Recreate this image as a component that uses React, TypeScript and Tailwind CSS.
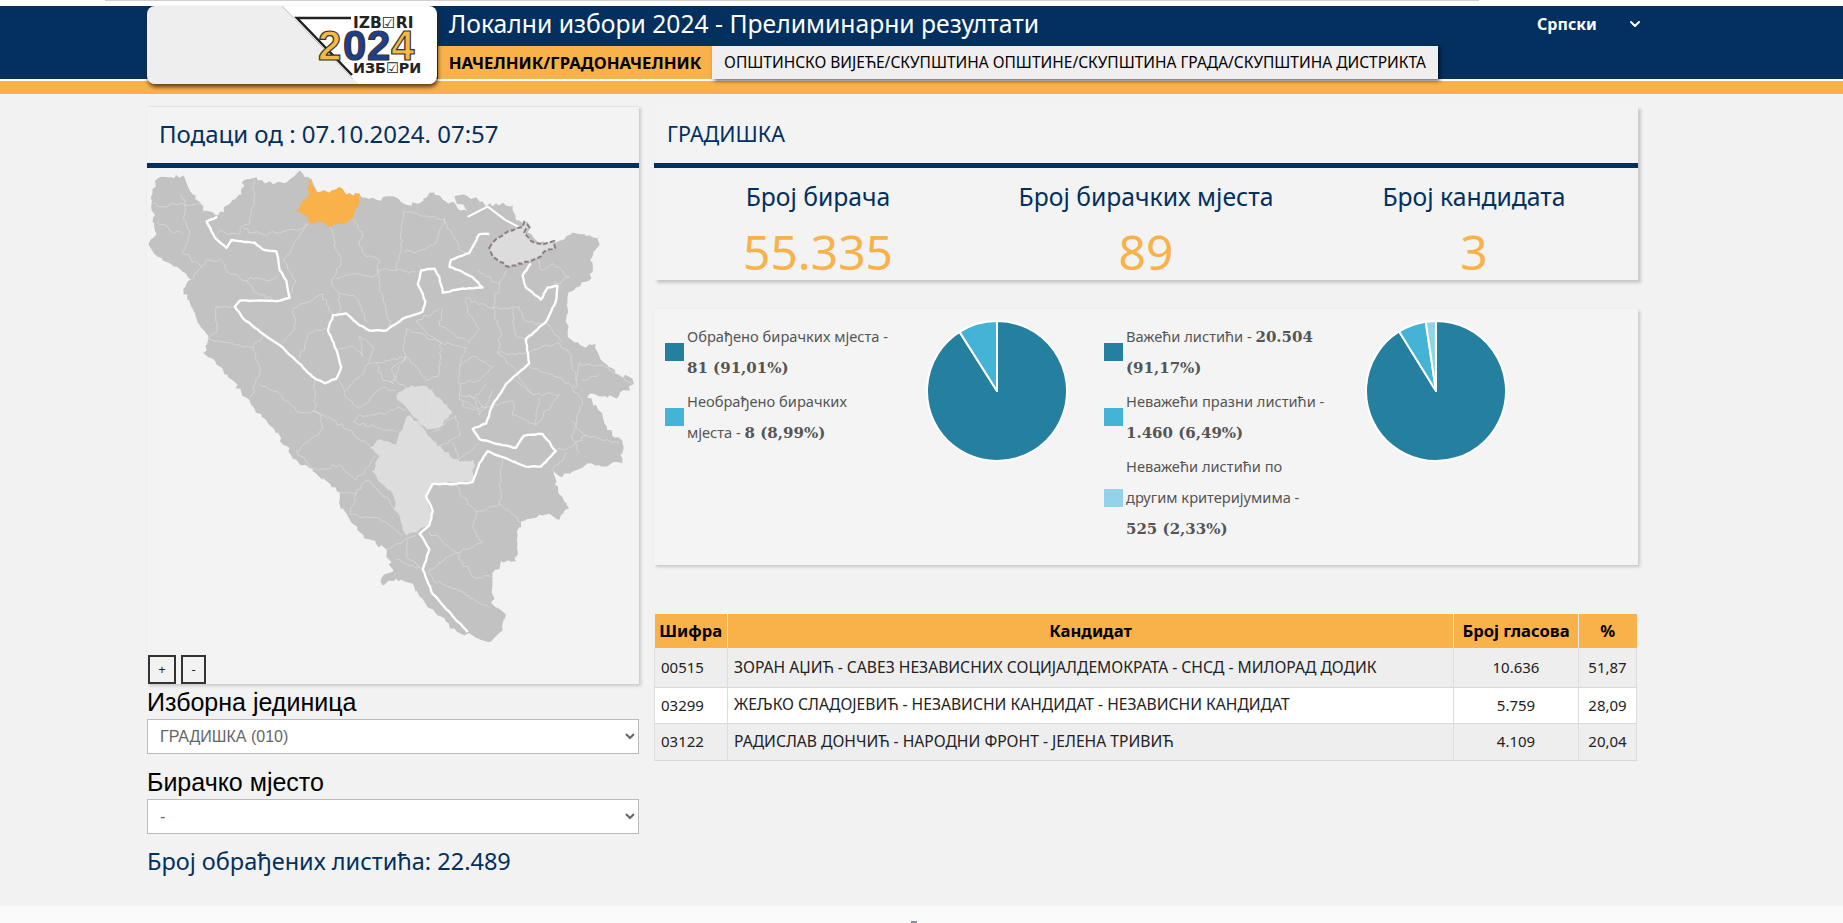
import { ChevronDown } from 'lucide-react';

const tahoma = "font-['Noto_Sans',sans-serif]";

// borders on the source map are jagged, so break every straight segment up a bit
function rough(points: string, amp: number, close = false) {
  const pts = points.split(' ').map((p) => p.split(',').map(Number));
  if (close) pts.push(pts[0]);
  let seed = pts.length * 7 + Math.round(pts[0][0]);
  const rnd = () => {
    seed = (seed * 9301 + 49297) % 233280;
    return seed / 233280 - 0.5;
  };
  const out: string[] = [];
  pts.forEach((p, i) => {
    out.push(`${p[0]},${p[1]}`);
    const q = pts[i + 1];
    if (!q) return;
    const len = Math.hypot(q[0] - p[0], q[1] - p[1]);
    const steps = Math.floor(len / 10);
    for (let s = 1; s < steps; s++) {
      const t = s / steps;
      out.push(`${p[0] + (q[0] - p[0]) * t + rnd() * amp},${p[1] + (q[1] - p[1]) * t + rnd() * amp}`);
    }
  });
  return out.join(' ');
}

const thinLines = [
  '40,125 70,135 120,125 155,130 185,130',
  '120,100 135,130 130,170 150,215 125,265 185,310 160,345',
  '50,180 80,190 90,205 130,215',
  '240,290 200,290 185,310',
  '240,285 260,320 310,350 330,340 380,350 415,335',
  '320,350 340,380 400,405',
  '225,225 240,205 270,215 300,215 310,190 330,185 340,135 345,60',
  '310,200 370,215 440,205 470,205 505,185',
  '505,185 470,230 450,270 430,290 470,350 450,400',
  '570,195 590,260 605,290 590,330 575,350 600,400 600,440',
  '640,170 670,210 660,250 680,280 720,290 715,320 770,320 785,265 790,150',
  '715,320 720,380 740,440 750,480',
  '590,345 640,330 700,340 715,320',
  '600,385 650,400 680,470',
  '790,150 840,160 915,170 960,260 985,270',
  '915,170 890,240 850,260 790,270',
  '770,320 830,325',
  '460,430 465,490 430,530',
  '460,430 510,410 550,390 560,420 580,450',
  '230,425 230,500 200,520',
  '230,425 285,430',
  '200,520 260,530 340,545 370,510',
  '340,545 360,620 330,690',
  '360,650 420,680 470,730 540,735 550,780 470,845',
  '525,640 525,730 550,740 640,790 690,830',
  '600,640 620,690 660,720 730,660 770,670',
  '480,575 510,500 560,490',
  '595,550 640,540 670,570 660,510',
  '690,590 620,670',
  '690,590 800,570 770,620 765,640 800,660',
  '800,570 830,600 860,640 900,620 905,530 800,490',
  '830,470 860,500 905,530 980,545 960,600 960,680 980,720 1040,720',
  '905,430 900,480 990,530 1020,490 990,450 980,400',
  '980,400 1060,430 1085,500 1075,560 1120,600',
  '1060,430 1140,425 1150,460 1170,470',
  '1080,360 1060,430',
  '1015,320 1080,360 1100,320',
  '1210,320 1240,300 1290,340',
  '1160,560 1260,530 1290,560 1310,640',
  '1170,600 1230,620 1310,660 1320,590 1400,600 1480,650',
  '1300,660 1330,700 1310,770 1300,810',
  '1040,720 1120,700 1120,740 1190,770 1260,680',
  '1250,845 1300,830 1340,800 1440,820',
  '1280,850 1240,900',
  '1090,870 1080,1000 1150,1050',
  '950,940 970,980 1010,1020 1080,1000',
  '1010,1020 1000,1060 1030,1110 950,1140 870,1080',
  '950,1140 930,1150 870,1190',
  '950,1140 1000,1210 1060,1210',
  '870,1190 880,1220 960,1250 1050,1300',
  '470,845 520,900 600,885 650,930 710,860',
  '600,965 650,970 680,930 750,990 770,1020',
  '650,970 630,1030 720,1040 790,1090',
  '740,1130 800,1100 830,1090',
  '800,1100 800,1150 850,1190',
  '770,1160 850,1190',
  '810,740 860,790',
  '880,660 870,720 860,780',
  '695,835 770,870 860,925',
  '960,650 1020,640 1060,600 1000,570 960,600',
  '990,680 1040,720 1060,670',
  '710,590 730,640 760,650 760,600 800,570',
  '640,760 660,740 710,740 770,720 800,725',
  '770,790 640,760',
  '880,790 950,740 960,800 900,830',
  '940,820 960,870 1000,840 1020,820',
  '960,680 1000,690 1040,650',
  '975,700 1010,720',
  '1000,690 1020,740 1040,720',
  '1120,600 1180,680 1260,680',
  '1170,470 1230,480 1270,530',
  '1230,370 1290,340',
  '1210,320 1200,290',
  '1120,430 1130,510 1160,520',
  '1075,560 1160,560',
  '1180,680 1130,640',
  '1190,770 1200,690',
  '1300,810 1320,850',
  '1340,800 1300,760',
  '1380,620 1330,640',
  '660,510 700,540 690,590',
  '800,490 790,540 800,570',
  '900,430 830,470',
];

const outline =
  '45,60 90,50 130,45 150,90 185,130 190,150 235,160 265,130 305,100 310,60 350,50 400,70 440,65 470,40 480,30 495,50 515,55 530,90 570,95 600,80 620,100 660,100 710,115 760,105 800,130 840,125 870,95 910,115 950,130 985,150 950,120 945,105 975,100 1030,120 1040,135 1070,125 1120,130 1130,175 1165,180 1175,195 1165,210 1200,240 1245,235 1250,240 1300,210 1385,225 1360,280 1350,350 1310,370 1285,400 1280,470 1295,520 1330,540 1370,535 1385,580 1430,620 1480,635 1485,650 1440,685 1405,690 1350,680 1345,690 1390,740 1420,800 1450,815 1450,880 1410,885 1345,880 1270,920 1240,900 1260,970 1290,1010 1260,1045 1235,1030 1200,1030 1145,1050 1135,1090 1130,1165 1085,1165 1060,1210 1060,1290 1100,1320 1090,1365 1050,1400 1020,1390 985,1375 975,1380 920,1340 860,1290 820,1230 770,1215 730,1235 725,1215 760,1195 740,1130 660,1080 600,1000 600,965 520,905 470,870 440,830 390,770 320,690 280,640 240,600 190,560 205,520 170,460 130,375 155,345 90,300 35,260 25,245 50,215 35,125';

const thickWest =
  '232,165 200,178 225,225 260,255 275,232 345,240 370,260 410,265 420,320 440,350 450,400 410,410 300,408 285,425 310,460 370,505 430,545 520,630 555,648 590,635 605,600 590,550 565,495 580,450 620,445 660,480 690,495 740,495 790,460 850,440 858,410 835,360 845,320 885,315 900,340 910,385 960,375 1030,370 1000,340 960,320 930,310 935,290 990,270 1020,215 1050,215';

const thickEast =
  '1175,300 1150,335 1160,370 1205,405 1225,370 1255,365 1250,410 1220,470 1160,520 1170,590 1100,650 1060,710 1040,765 1000,780 1020,810 1080,825 1130,835 1155,800 1210,795 1250,845 1205,890 1160,890 1110,870 1045,845 1020,880 1000,935 950,940 880,940 860,975 880,1020 870,1060 840,1085 870,1130 850,1190 880,1260 985,1370';

function BosniaMap() {
  return (
    <svg viewBox="21 23 1479 1498" preserveAspectRatio="none" className="block w-[492px] h-[516px]">
      <polygon fill="#c2c2c2" points={rough(outline, 13, true)} />
      <polygon fill="#dddddd" points={rough('770,685 800,660 860,655 900,690 940,735 900,775 860,780 810,730', 9, true)} />
      <polygon
        fill="#dddddd"
        points={rough('780,790 810,740 860,790 910,840 960,875 1005,870 1000,935 880,940 860,975 875,1030 870,1060 800,1090 770,1020 760,970 695,905 720,860 690,835 720,810 770,825', 9, true)}
      />
      {thinLines.map((points) => (
        <polyline key={points} points={rough(points, 10)} fill="none" stroke="#e4e4e4" strokeWidth="1.6" strokeLinejoin="round" />
      ))}
      <polygon fill="#f9b24a" points={rough('515,55 530,90 570,95 600,78 620,100 662,98 640,170 600,185 570,195 545,180 515,185 495,160 468,145 505,105 505,60', 12, true)} />
      <polyline fill="none" stroke="#ffffff" strokeWidth="7" strokeLinejoin="round" points={rough(thickWest, 3)} />
      <polyline fill="none" stroke="#ffffff" strokeWidth="6" strokeLinejoin="round" points="985,165 1045,135 1100,175 1140,195" />
      <polyline fill="none" stroke="#ffffff" strokeWidth="7" strokeLinejoin="round" points={rough(thickEast, 3)} />
      <polygon
        fill="#dcdcdc"
        stroke="#8b7f85"
        strokeWidth="6"
        strokeDasharray="14 7"
        points={rough('1050,255 1070,230 1110,205 1150,195 1155,180 1170,195 1155,210 1175,235 1210,245 1245,235 1248,255 1225,260 1205,280 1170,295 1110,310 1080,295 1060,280', 6, true)}
      />
    </svg>
  );
}

function slicePath(from: number, to: number, r: number) {
  const point = (p: number) => {
    const a = (p / 100) * 2 * Math.PI - Math.PI / 2;
    return `${72 + r * Math.cos(a)} ${72 + r * Math.sin(a)}`;
  };
  const large = to - from > 50 ? 1 : 0;
  return `M72 72 L${point(from)} A${r} ${r} 0 ${large} 1 ${point(to)} Z`;
}

function Pie({ slices }: { slices: { value: number; color: string }[] }) {
  let start = 0;
  return (
    <svg viewBox="0 0 144 144" className="w-[144px] h-[144px] shrink-0 -mt-[2px]">
      {slices.map((s) => {
        const d = slicePath(start, start + s.value, 70);
        start += s.value;
        return <path key={s.color} d={d} fill={s.color} stroke="#ffffff" strokeWidth="2" strokeLinejoin="round" />;
      })}
    </svg>
  );
}

function LegendItem({ color, children }: { color: string; children: React.ReactNode }) {
  return (
    <div className="flex items-center gap-[3px] mb-[3px]">
      <div className="w-[19px] h-[18px] shrink-0" style={{ backgroundColor: color }} />
      <div className="text-[14.65px] leading-[31px] text-[#555] whitespace-nowrap">{children}</div>
    </div>
  );
}

function Num({ children }: { children: React.ReactNode }) {
  return <b className="font-['DejaVu_Serif',serif] font-bold text-[15px] leading-none">{children}</b>;
}

function Stat({ label, value }: { label: string; value: string }) {
  return (
    <div className="flex-1 flex flex-col items-center pt-[10px]">
      <div className="text-[24.7px] leading-[38px] text-[#03305f]">{label}</div>
      <div className="mt-[8px] text-[48px] leading-[56px] text-[#f9b24a]">{value}</div>
    </div>
  );
}

const rows = [
  ['00515', 'ЗОРАН АЏИЋ - САВЕЗ НЕЗАВИСНИХ СОЦИЈАЛДЕМОКРАТА - СНСД - МИЛОРАД ДОДИК', '10.636', '51,87'],
  ['03299', 'ЖЕЉКО СЛАДОЈЕВИЋ - НЕЗАВИСНИ КАНДИДАТ - НЕЗАВИСНИ КАНДИДАТ', '5.759', '28,09'],
  ['03122', 'РАДИСЛАВ ДОНЧИЋ - НАРОДНИ ФРОНТ - ЈЕЛЕНА ТРИВИЋ', '4.109', '20,04'],
];

function Logo() {
  return (
    <svg viewBox="0 0 290 78" className="w-[290px] h-[78px]">
      <polygon points="135,0 290,0 290,78 211,78" fill="#ffffff" />
      <polygon points="0,0 135,0 211,78 0,78" fill="#eeeeee" />
      <polyline points="204,12 150,12 205,69" fill="none" stroke="#222" strokeWidth="2.5" />
      <text x="206" y="22" className="font-['DejaVu_Sans',sans-serif] font-bold text-[15.5px]" fill="#222">IZB☑RI</text>
      <text x="206" y="67" className="font-['DejaVu_Sans',sans-serif] font-bold text-[14.3px]" fill="#222">ИЗБ☑РИ</text>
      <g className="font-['Liberation_Sans',sans-serif] font-bold text-[42px]" stroke="#333" strokeWidth="1.2">
        <text x="171" y="54" fill="#f4b942">2</text>
        <text x="196" y="54" fill="#1f3f8f">0</text>
        <text x="220" y="54" fill="#1f3f8f">2</text>
        <text x="244" y="54" fill="#f4b942">4</text>
      </g>
    </svg>
  );
}

export default function App() {
  return (
    <div className={`min-h-[923px] flex flex-col bg-white ${tahoma}`}>
      <div className="h-[6px] bg-white">
        <div className="ml-[105px] w-[1374px] h-px bg-[#cfcfcf]" />
      </div>

      <header>
        <div className="h-[73px] bg-[#03305f] pl-[147px]">
          <div className="flex">
            <div className="relative z-10 w-[290px] h-[78px] rounded-[8px] overflow-hidden shrink-0 shadow-[1px_3px_4px_rgba(60,30,0,0.8)]">
              <Logo />
            </div>
            <div className="w-[1001px]">
              <div className="h-[40px] flex items-center justify-between pl-[12px] pb-[4px]">
                <h1 className="text-[24.7px] leading-[32px] font-normal text-white">Локални избори 2024 - Прелиминарни резултати</h1>
                <div className="flex items-center -mr-[205px] w-[106px] justify-between text-white text-[16px] font-bold">
                  <span>Српски</span>
                  <ChevronDown size={16} strokeWidth={3} />
                </div>
              </div>
              <nav className="flex h-[33px] pl-px text-black">
                <div className="w-[274px] bg-[#f9b24a] flex items-center justify-center font-bold text-[16.7px]">НАЧЕЛНИК/ГРАДОНАЧЕЛНИК</div>
                <div className="w-[726px] bg-[#f0eeee] flex items-center justify-center text-[15.5px] shadow-[2px_2px_4px_rgba(0,0,0,0.6)]">
                  ОПШТИНСКО ВИЈЕЋЕ/СКУПШТИНА ОПШТИНЕ/СКУПШТИНА ГРАДА/СКУПШТИНА ДИСТРИКТА
                </div>
              </nav>
            </div>
          </div>
        </div>
        <div className="h-[2px] bg-white" />
        <div className="h-[13px] bg-[#f9b24a]" />
      </header>

      <main className="h-[812px] bg-[#f2f2f2] pl-[147px] pt-[12px] flex gap-[15px]">
        <section className="w-[492px] shrink-0">
          <div className="bg-[#f3f3f3] shadow-[2px_2px_3px_#c8c8c8] border-t border-[#e4e4e4]">
            <div className="h-[56px] flex items-center pl-[12px] pb-[2px] text-[24px] text-[#03305f]">Подаци од : 07.10.2024. 07:57</div>
            <div className="h-[5px] bg-[#03305f]" />
            <div className="relative">
              <BosniaMap />
              <div className="absolute left-px bottom-0 flex gap-[5px]">
                <button className="w-[28px] h-[29px] border-2 border-[#333] text-[13px] text-[#222] bg-[#f2f2f2]">+</button>
                <button className="w-[25px] h-[29px] border-2 border-[#333] text-[13px] text-[#222] bg-[#f2f2f2]">-</button>
              </div>
            </div>
          </div>

          <div className="font-['Liberation_Sans',sans-serif] text-black">
            <label className="block mt-[2px] text-[25px] leading-[32px]">Изборна јединица</label>
            <select defaultValue="010" className="block w-full mt-px h-[35px] bg-white border border-[#bbb] pl-[8px] text-[16px] text-[#666]">
              <option value="010">ГРАДИШКА (010)</option>
            </select>
            <label className="block mt-[12px] text-[25px] leading-[32px]">Бирачко мјесто</label>
            <select defaultValue="-" className="block w-full mt-px h-[35px] bg-white border border-[#bbb] pl-[8px] text-[16px] text-[#666]">
              <option value="-">-</option>
            </select>
          </div>
          <div className="mt-[11px] text-[23.5px] leading-[32px] text-[#03305f]">Број обрађених листића: 22.489</div>
        </section>

        <section className="w-[984px] shrink-0">
          <div className="bg-[#f3f3f3] shadow-[3px_3px_3px_#c8c8c8]">
            <div className="h-[57px] flex items-center pl-[13px] text-[21.5px] text-[#03305f]">ГРАДИШКА</div>
            <div className="h-[5px] bg-[#03305f]" />
            <div className="flex h-[112px]">
              <Stat label="Број бирача" value="55.335" />
              <Stat label="Број бирачких мјеста" value="89" />
              <Stat label="Број кандидата" value="3" />
            </div>
          </div>

          <div className="mt-[29px] h-[256px] bg-[#f4f4f4] shadow-[2px_2px_3px_#c8c8c8] pl-[11px] pt-[12px] flex">
            <div className="w-[439px] flex shrink-0">
              <div className="w-[260px] shrink-0">
                <LegendItem color="#257f9f">Обрађено бирачких мјеста -<br /><Num>81 (91,01%)</Num></LegendItem>
                <LegendItem color="#45b3d6">Необрађено бирачких<br />мјеста - <Num>8 (8,99%)</Num></LegendItem>
              </div>
              <Pie slices={[{ value: 91.01, color: '#257f9f' }, { value: 8.99, color: '#45b3d6' }]} />
            </div>
            <div className="flex">
              <div className="w-[260px] shrink-0">
                <LegendItem color="#257f9f">Важећи листићи - <Num>20.504</Num><br /><Num>(91,17%)</Num></LegendItem>
                <LegendItem color="#45b3d6">Неважећи празни листићи -<br /><Num>1.460 (6,49%)</Num></LegendItem>
                <LegendItem color="#93d3e9">Неважећи листићи по<br />другим критеријумима -<br /><Num>525 (2,33%)</Num></LegendItem>
              </div>
              <Pie slices={[{ value: 91.17, color: '#257f9f' }, { value: 6.49, color: '#45b3d6' }, { value: 2.33, color: '#93d3e9' }]} />
            </div>
          </div>

          <table className="mt-[49px] w-[983px] table-fixed border-collapse text-[15px] text-[#222]">
            <thead>
              <tr className="h-[34px] bg-[#f9b24a] text-black text-[16.6px] leading-[22px]">
                <th className="w-[73px] p-0 font-bold border-r border-[#e8e8e8]">Шифра</th>
                <th className="w-[726px] p-0 font-bold border-r border-[#e8e8e8]">Кандидат</th>
                <th className="w-[125px] p-0 font-bold border-r border-[#e8e8e8]">Број гласова</th>
                <th className="p-0 font-bold">%</th>
              </tr>
            </thead>
            <tbody>
              {rows.map((r, i) => (
                <tr key={r[0]} className={`border-b border-[#d8d8d8] ${i === 1 ? 'bg-white h-[36px]' : i === 0 ? 'bg-[#eeeeee] h-[39px]' : 'bg-[#eeeeee] h-[37px]'}`}>
                  <td className="pl-[6px] border-l border-r border-[#dddddd]">{r[0]}</td>
                  <td className="pl-[6px] border-r border-[#dddddd] whitespace-nowrap text-[15.65px]">{r[1]}</td>
                  <td className="text-center border-r border-[#dddddd]">{r[2]}</td>
                  <td className="text-center border-r border-[#dddddd]">{r[3]}</td>
                </tr>
              ))}
            </tbody>
          </table>
        </section>
      </main>

      <footer className="h-[17px] bg-[#fafafa] flex items-end pl-[911px]">
        <div className="w-[6px] h-[2px] bg-[#8a8f9a]" />
      </footer>
    </div>
  );
}
